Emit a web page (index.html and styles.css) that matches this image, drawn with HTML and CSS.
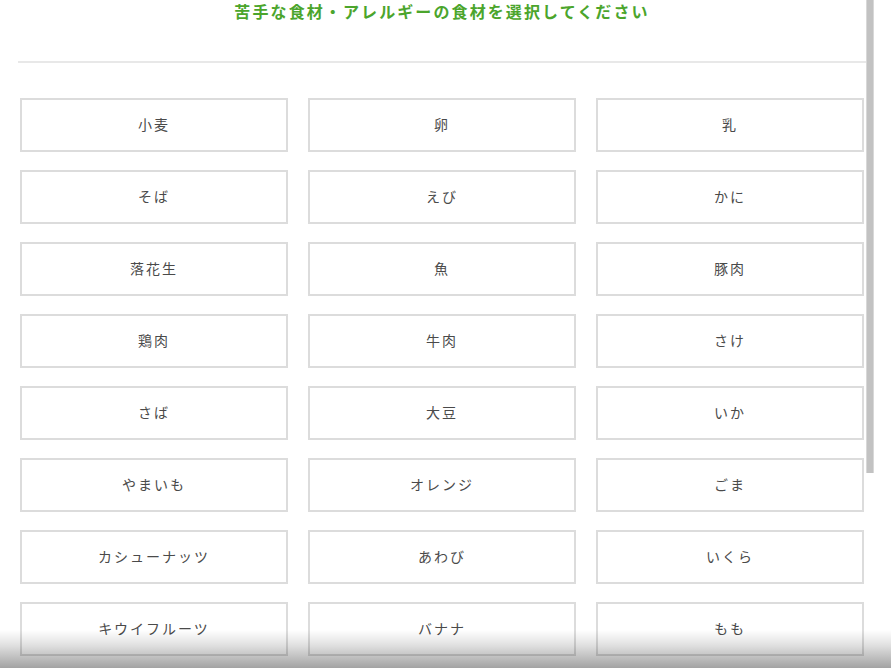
FILE: index.html
```html
<!DOCTYPE html>
<html lang="ja">
<head>
<meta charset="utf-8">
<title>食材選択</title>
<link rel="stylesheet" href="styles.css">
</head>
<body>
<div class="page">
  <header class="head">
    <h1 class="title">苦手な食材・アレルギーの食材を選択してください</h1>
  </header>
  <div class="grid">
    <button class="item">小麦</button>
    <button class="item">卵</button>
    <button class="item">乳</button>
    <button class="item">そば</button>
    <button class="item">えび</button>
    <button class="item">かに</button>
    <button class="item">落花生</button>
    <button class="item">魚</button>
    <button class="item">豚肉</button>
    <button class="item">鶏肉</button>
    <button class="item">牛肉</button>
    <button class="item">さけ</button>
    <button class="item">さば</button>
    <button class="item">大豆</button>
    <button class="item">いか</button>
    <button class="item">やまいも</button>
    <button class="item">オレンジ</button>
    <button class="item">ごま</button>
    <button class="item">カシューナッツ</button>
    <button class="item">あわび</button>
    <button class="item">いくら</button>
    <button class="item">キウイフルーツ</button>
    <button class="item">バナナ</button>
    <button class="item">もも</button>
  </div>
</div>
<div class="scroll-thumb"></div>
<div class="bottom-shade"></div>
</body>
</html>
```
FILE: styles.css
```css
html, body {
  margin: 0;
  padding: 0;
  background: #fff;
  height: 100%;
  overflow: hidden;
}
body {
  font-family: "Noto Sans CJK JP", "Noto Sans", sans-serif;
  position: relative;
}
.page {
  width: 848px;
  margin-left: 18px;
}
.head {
  height: 61px;
  border-bottom: 2px solid #e8e8e8;
  box-sizing: content-box;
}
.title {
  margin: 0;
  padding-top: 0;
  font-size: 16px;
  line-height: 22px;
  font-weight: bold;
  color: #4ba52c;
  letter-spacing: 2.1px;
  text-align: center;
}
.grid {
  display: grid;
  grid-template-columns: repeat(3, 268px);
  column-gap: 20px;
  row-gap: 18px;
  padding: 35px 2px 0;
}
.item {
  height: 54px;
  margin: 0;
  padding: 0 0 3px;
  background: #fff;
  border: 2px solid #dcdcdc;
  font-family: "Noto Sans CJK JP", "Noto Sans", sans-serif;
  font-size: 14px;
  letter-spacing: 2px;
  color: #4a4a4a;
  text-align: center;
}
.scroll-thumb {
  position: absolute;
  left: 866px;
  top: 0;
  width: 6px;
  height: 473px;
  background: #c2c2c2;
  border-left: 1px solid #d8d8d8;
  border-right: 1px solid #d8d8d8;
}
.bottom-shade {
  position: absolute;
  left: 0;
  right: 0;
  bottom: 0;
  height: 38px;
  background: linear-gradient(to bottom, rgba(0,0,0,0) 0%, rgba(0,0,0,0.12) 40%, rgba(0,0,0,0.36) 100%);
}
```
